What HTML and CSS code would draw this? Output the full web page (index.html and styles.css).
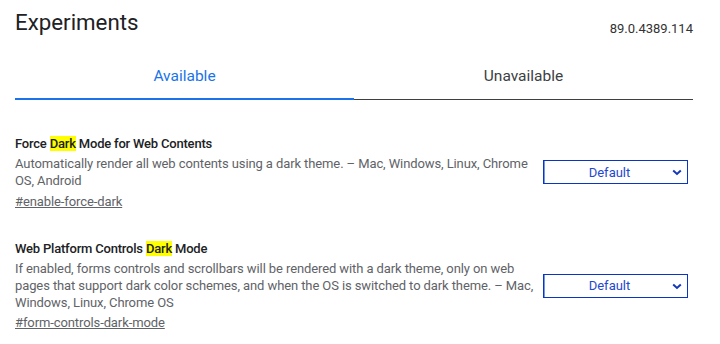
FILE: index.html
```html
<!DOCTYPE html>
<html>
<head>
<meta charset="utf-8">
<link rel="stylesheet" href="styles.css">
</head>
<body>
<div class="page">
  <header class="header">
    <h1 class="title">Experiments</h1>
    <span class="version">89.0.4389.114</span>
  </header>
  <nav class="tabs">
    <div class="tab active">Available</div>
    <div class="tab">Unavailable</div>
  </nav>
  <section class="list">
    <div class="experiment">
      <div class="info">
        <div class="name">Force <mark class="hl">Dark</mark> Mode for Web Contents</div>
        <p class="desc">Automatically render all web contents using a dark theme. – Mac, Windows, Linux, Chrome OS, Android</p>
        <a class="link" href="#enable-force-dark">#enable-force-dark</a>
      </div>
      <div class="select">
        <span class="select-text">Default</span>
        <svg class="chev" width="10" height="7" viewBox="0 0 10 7"><path d="M1.2 1.5 L5 5 L8.8 1.5" fill="none" stroke="#1538b8" stroke-width="2"/></svg>
      </div>
    </div>
    <div class="experiment">
      <div class="info">
        <div class="name">Web Platform Controls <mark class="hl">Dark</mark> Mode</div>
        <p class="desc">If enabled, forms controls and scrollbars will be rendered with a dark theme, only on web pages that support dark color schemes, and when the OS is switched to dark theme. – Mac, Windows, Linux, Chrome OS</p>
        <a class="link" href="#form-controls-dark-mode">#form-controls-dark-mode</a>
      </div>
      <div class="select">
        <span class="select-text">Default</span>
        <svg class="chev" width="10" height="7" viewBox="0 0 10 7"><path d="M1.2 1.5 L5 5 L8.8 1.5" fill="none" stroke="#1538b8" stroke-width="2"/></svg>
      </div>
    </div>
  </section>
</div>
</body>
</html>
```
FILE: styles.css
```css
html, body {
  margin: 0;
  padding: 0;
  background: #fff;
}
body {
  font-family: Roboto, "Liberation Sans", sans-serif;
  color: #202124;
}
.page {
  padding: 0 27px 0 15px;
}
.header {
  display: flex;
  justify-content: space-between;
  align-items: flex-end;
  height: 37px;
}
.title {
  margin: 0;
  font-size: 22.3px;
  font-weight: 400;
  line-height: 26px;
  padding-top: 9px;
  padding-bottom: 2px;
  color: #202124;
}
.version {
  font-size: 13px;
  color: #333;
  line-height: 15px;
  padding-bottom: 1px;
}
.tabs {
  display: flex;
  margin-top: 13px;
}
.tab {
  flex: 1;
  text-align: center;
  font-size: 15.5px;
  line-height: 18px;
  padding: 17px 0 14px;
  color: #3c4043;
  border-bottom: 1px solid #3c4043;
}
.tab.active {
  color: #1a73e8;
  border-bottom: 2px solid #1a73e8;
  padding-bottom: 13px;
}
.list {
  padding-top: 35px;
}
.experiment {
  display: flex;
  align-items: center;
  padding-right: 5px;
  margin-bottom: 30px;
}
.info {
  flex: 1;
  min-width: 0;
  margin-right: 8px;
}
.name {
  font-size: 13px;
  font-weight: 500;
  letter-spacing: -0.2px;
  line-height: 17px;
  color: #202124;
  margin-bottom: 3px;
}
.hl {
  background: #ffff00;
  color: #202124;
}
.desc {
  margin: 0;
  font-size: 13px;
  letter-spacing: -0.1px;
  line-height: 17.3px;
  color: #5f6368;
}
.link {
  display: inline-block;
  margin-top: 3px;
  font-size: 13px;
  letter-spacing: -0.1px;
  line-height: 17px;
  color: #5f6368;
  text-decoration: underline;
}
.select {
  position: relative;
  width: 145px;
  height: 24px;
  box-sizing: border-box;
  border: 1px solid #0b35c0;
  box-shadow: inset 1px 0 0 #6b9be6;
  display: flex;
  align-items: center;
  justify-content: center;
  padding-right: 12px;
  font-size: 13px;
  color: #1f48d0;
}
.chev {
  position: absolute;
  right: 5px;
  top: 8px;
}
```
